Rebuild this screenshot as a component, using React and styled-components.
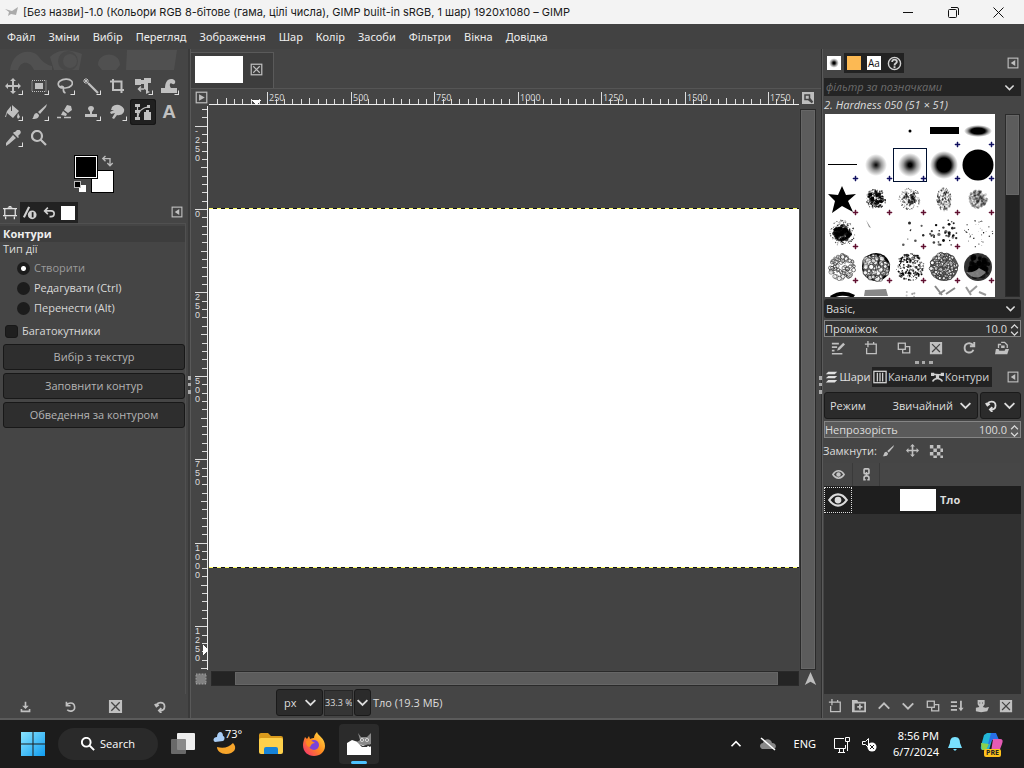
import React, { useLayoutEffect, useRef, useState } from "react";
import styled, { createGlobalStyle, css } from "styled-components";

const Global = createGlobalStyle`
  * { box-sizing: border-box; }
  body { margin: 0; background: #454545; color: #dcdcdc; font: 11px/16px "Open Sans", "Noto Sans", sans-serif; }
  button, input, select { font: inherit; color: inherit; margin: 0; padding: 0; border: 0; background: none; }
  button { cursor: pointer; }
  svg { display: block; flex: none; }
  p, h1, h2 { margin: 0; font: inherit; }
`;

/* ---------- icons ---------- */

const line = { fill: "none", stroke: "currentColor", strokeWidth: 1.5 };
const glyphs = {
  move: <path d="M8 0l3 3H9v4h4V5l3 3-3 3V9H9v4h2l-3 3-3-3h2V9H3v2L0 8l3-3v2h4V3H5z" />,
  rect: <><rect x="1" y="2.500" width="14" height="11" {...line} strokeWidth="1" strokeDasharray="1 1" /><rect x="4" y="5" width="8" height="6" /></>,
  lasso: <path {...line} strokeWidth="1.700" d="M6 10C1 10 0 5 3 3s9-3 11.500 0-1 7-6 7-5 0-5-1 3-1 3 1-1 4 2 5" />,
  wand: <><path {...line} strokeWidth="2.200" d="M5 5l10 10" /><path {...line} strokeWidth="1" d="M3 0v6M0 3h6M1 1l4 4M5 1L1 5" /></>,
  crop: <path {...line} strokeWidth="2" d="M1 3.500h11.500V15M4 1v11h11" />,
  transform: <><path d="M0 1h6v1h3V0h7v5h-3v8l2 1-4 2v-4l-2-1V6H6v1H0z" /><path {...line} d="M9 11H4M6 8.500L3.500 11 6 13.500" /></>,
  warp: <path d="M0 15v-5h4C4 5 6 1 10 1c3 0 5 2 4 4s-3 1-4 0c-2 1-1 4 0 5h6v5z" />,
  bucket: <path d="M2 7l4-5v5h1V1l7 6-6 7-6-5-1 4H0zM13 9l2 4-2 2-1-2z" />,
  brush: <path d="M16 0l-1 3-6 7-2-2zM6 9l2 2c0 4-4 4-7 4 2-1 1-6 5-6z" />,
  eraser: <><path d="M10 1l4 1 1 4-4 3-4-3zM6 7l4 3-1 2-5-1z" /><path {...line} d="M0 13.500h4M7 13.500h7" /></>,
  stamp: <path d="M8 2a3 3 0 013 3L9 8v2h5v3H2v-3h5V8L5 5a3 3 0 013-3z" />,
  smudge: <path d="M3 3c4-4 10-2 12 2 1 4-3 7-7 6l-3 4-2-1 3-5-4 1-1-2 4-2-3 0z" />,
  path: <><path {...line} strokeWidth="1.200" d="M2.500 1v14M3 14C3 7 8 3 14 3" /><path d="M0 0h5v3H0zM0 6h5v3H0zM0 13h5v3H0zM12 1h3v3h-3zM11 6h3v2h2v8H9V8h2z" /></>,
  picker: <path d="M12 0c3-1 5 2 3 4l-2 2 1 1-1 1-5-5 1-1 1 0zM8 5l3 3-7 6-3 2 0-3z" />,
  zoom: <path {...line} strokeWidth="2.200" d="M10 10l5 5M11 6A5 5 0 111 6a5 5 0 0110 0z" />,
  swap: <path {...line} d="M5 1L2 4l3 3M2 4h8v8M7 9l3 3 3-3" />,
  options: <><path d="M5 2l2-2h2l2 2z" /><rect x="2" y="3" width="12" height="8" {...line} /><path {...line} d="M0 3h2M0 11h2M14 3h2M14 11h2M3 12v3M13 12v3" /></>,
  device: <><path {...line} strokeWidth="2.500" d="M1 13L7 1" /><circle cx="10.500" cy="10" r="5" /><path d="M10 7h2v6h-2z" fill="#222" /></>,
  undo: <path {...line} strokeWidth="2" d="M6 2L2 6l4 4M2 6h8c5 0 5 7 0 7H8" />,
  panel: <><rect x="1.500" y="1.500" width="13" height="13" {...line} /><path d="M11 4v8L5 8z" /></>,
  panelRight: <><rect x="1.500" y="1.500" width="13" height="13" {...line} /><path d="M5 4v8l7-4z" /></>,
  close: <><rect x="1.500" y="1.500" width="13" height="13" {...line} /><path {...line} d="M4 4l8 8M12 4l-8 8" /></>,
  deleteBox: <path fillRule="evenodd" d="M1 1h14v14H1zM4 3L3 4l4 4-4 4 1 1 4-4 4 4 1-1-4-4 4-4-1-1-4 4z" />,
  save: <path d="M7 2h2v5h3L8 11 4 7h3zM2 11h2v2h8v-2h2v4H2z" />,
  restore: <path {...line} strokeWidth="2" d="M3 2v5h5M3 7c2-4 9-5 10 1s-6 7-9 4" />,
  reset: <path {...line} strokeWidth="2.200" d="M3 8c0-6 10-7 10 0 0 4-3 5-6 5M9 10l-3 3 3 3M1 5l2 3 3-2" />,
  redo: <path {...line} strokeWidth="2.200" d="M13 10c-2 5-10 4-10-2s7-7 10-3M14 1v5H9" />,
  edit: <><path {...line} strokeWidth="1.800" d="M1 3h8M1 7h6M1 11h3M1 14.500h12" /><path d="M14 2l2 2-6 6-3 1 1-3z" /></>,
  newDoc: <path {...line} d="M8 3.500h6v11H3V8M4.500 0v7M1 3.500h7M11 1v3" />,
  copy: <><rect x="1.500" y="2.500" width="8" height="7" {...line} /><path {...line} d="M6.500 10v3.500h8v-7H10" /></>,
  open: <><path {...line} d="M4 8V4h3M7 1.500h4l3 3V8" /><path d="M1 9h3l1 2h6l1-2h4l-2 6H0zM7 5h4v3H7z" /></>,
  layers: <path d="M4 1h11l-3 3H1zM4 6h11l-3 3H1zM4 11h11l-3 3H1z" />,
  channels: <><rect x="1" y="1.500" width="14" height="13" {...line} /><path {...line} d="M5 3v10M8 3v10M11 3v10" /></>,
  paths: <><path {...line} strokeWidth="2" d="M1 4l14 1M2 13C4 8 12 8 14 13" /><path d="M0 2h4v4H0zM12 2h4v4h-4zM6 5h4v4H6z" /></>,
  eye: <><path {...line} strokeWidth="1.800" d="M1 8c4-6 10-6 14 0-4 6-10 6-14 0z" /><circle cx="8" cy="8" r="2.700" /></>,
  chain: <><rect x="5" y="1" width="6" height="6" rx="1" {...line} strokeWidth="2" /><path {...line} strokeWidth="2" d="M8 5v5M4 14.500h3M9 14.500h3M5 15v-3c0-3 6-3 6 0v3" /></>,
  checker: <path d="M1 1h4v4H1zM9 1h4v4H9zM5 5h4v4H5zM13 5h3v4h-3zM1 9h4v4H1zM9 9h4v4H9zM5 13h4v3H5zM13 13h3v3h-3z" />,
  folderPlus: <path fillRule="evenodd" d="M0 1h6l1 2h9v12H0zM3 5v8h11V5zM8 6h2v2h2v2h-2v2H8v-2H6V8h2z" />,
  up: <path {...line} strokeWidth="2.200" d="M2 11l6-6 6 6" />,
  down: <path {...line} strokeWidth="2.200" d="M2 5l6 6 6-6" />,
  merge: <><path {...line} strokeWidth="2" d="M1 3.500h7M1 8h7M1 12.500h7M12.500 2v10" /><path d="M9.500 10h6L12.500 14z" /></>,
  mask: <path fillRule="evenodd" d="M3 1h8v5L9 9l3 1 4-1-2 5-7 1-6-1v-4l4-1-2-3zM5 4v1h1V4zM8 4v1h1V4z" />,
  help: <><circle cx="8" cy="8" r="6.500" {...line} /><path {...line} strokeWidth="2" d="M5.500 6.500c0-4 5-3 5-.5 0 2-2.500 1.500-2.500 4M8 11v2" /></>,
  nav: <path d="M8 0l7 16-7-4-7 4z" />,
  quick: <><rect x="2" y="2" width="12" height="12" opacity=".5" /><rect x="1.500" y="1.500" width="13" height="13" {...line} strokeDasharray="1 1" /></>,
  navZoom: <path fillRule="evenodd" d="M0 0h16v16H0zM3 3v8h5l5 4 2-2-4-5V3zM5 5h4v4H5z" />,
};

const Svg = styled.svg.attrs({ viewBox: "0 0 16 16", fill: "currentColor", "aria-hidden": true })`
  width: ${(p) => p.$size || 16}px;
  height: ${(p) => p.$size || 16}px;
`;
const Icon = ({ name, size }) => <Svg $size={size}>{glyphs[name]}</Svg>;

/* ---------- window frame ---------- */

const Screen = styled.div`
  display: flex; flex-direction: column; height: 100vh; min-height: 640px; overflow: hidden;
`;
const TitleBar = styled.header`
  display: flex; align-items: center; height: 24px; padding-left: 5px; gap: 4px;
  background: #f3f3f3; color: #1a1a1a; font: 11px/16px Inter, "Noto Sans", sans-serif;
`;
const TitleText = styled.h1`flex: 1; white-space: nowrap;`;
const WindowButtons = styled.div`display: flex; padding-right: 3px;`;
const WindowButton = styled.button`
  width: 45px; height: 24px; display: grid; place-items: center; color: #111;
`;
const MenuBar = styled.nav`
  display: flex; align-items: center; gap: 13px; height: 25px; padding: 0 7px; flex: none;
  font: 11px/16px "Noto Sans", sans-serif; color: #eee; background: #424242;
`;
const MenuItem = styled.button`white-space: nowrap;`;
const Workspace = styled.main`
  flex: 1; min-height: 0; display: grid; grid-template-columns: 190px minmax(0, 1fr) 203px;
  border-bottom: 2px solid #5b5b5b;
`;
const IconButton = styled.button`
  display: grid; place-items: center; min-width: 16px; height: 16px; color: ${(p) => p.$color || "#c0c0c0"};
`;
const Grip = styled.i`
  display: block; border: 0 dotted #aaa; flex: none;
  ${(p) => p.$vertical ? css`width: 3px; height: 18px; border-left-width: 3px;` : css`width: 18px; height: 3px; border-top-width: 3px;`}
`;

/* ---------- left dock ---------- */

const Dock = styled.aside`
  display: flex; flex-direction: column; min-height: 0; position: relative; min-width: 0;
  border-right: 2px solid #3a3a3a;
`;
const DockGrip = styled.span`
  position: absolute; top: 327px; ${(p) => p.$side}: -3px; z-index: 1;
`;
const LogoStrip = styled.svg`width: 180px; height: 24px;`;
const Tools = styled.div`
  display: grid; grid-template-columns: repeat(7, 26px); grid-auto-rows: 26px;
`;
const Tool = styled.button`
  display: grid; place-items: center; position: relative; color: #c0c0c0; border-radius: 3px;
  ${(p) => p.$active && css`background: #202020; box-shadow: inset 0 0 0 1px #161616;`}
  &::after {
    content: ""; display: ${(p) => (p.$plain ? "none" : "block")};
    position: absolute; right: 3px; bottom: 4px; border: 1px solid; border-color: transparent #ddd #ddd transparent; width: 3px; height: 3px;
  }
`;
const ToolLetter = styled.b`font: bold 19px/20px "Liberation Sans", sans-serif;`;
const ColorArea = styled.div`height: 51px; padding: 4px 0 0 73px;`;
const Tabs = styled.div`
  display: flex; align-items: stretch; height: ${(p) => p.$height || 20}px; flex: none;
`;
const Tab = styled.button`
  display: flex; align-items: center; justify-content: center; gap: 1px;
  min-width: ${(p) => p.$min || 20}px; white-space: nowrap; color: ${(p) => (p.$active ? "#e0e0e0" : "#d0d0d0")};
  background: ${(p) => (p.$active ? "#454545" : "#222")};
`;
const Swatch = styled.i`
  display: grid; place-items: center; width: 14px; height: 14px; color: #111; font-style: normal; font-size: 10px; line-height: 14px;
  background: ${(p) => p.$fill || "#fff"};
`;
const Push = styled.span`flex: 1;`;
const PanelBody = styled.section`
  flex: 1; min-height: 0; display: flex; flex-direction: column;
  border: 1px solid #505050; border-width: 1px 1px 0 0; margin-right: 2px;
`;
const PanelTitle = styled.h2`
  font-weight: bold; line-height: 16px; padding-left: 3px; color: #eee; background: #3d3d3d; margin-top: 2px;
`;
const Group = styled.fieldset`border: 0; margin: 0; padding: 0; min-width: 0;`;
const Legend = styled.legend`padding: 0 0 0 3px; line-height: 14px; height: 16px;`;
const Choice = styled.label`
  display: flex; align-items: center; height: 20px; padding-left: ${(p) => p.$indent}px; gap: 4px;
  color: ${(p) => (p.$dim ? "#9a9a9a" : "#d8d8d8")};
`;
const PolygonRow = styled(Choice).attrs({ $indent: 5 })`margin-top: 3px;`;
const Radio = styled.input.attrs({ type: "radio" })`
  appearance: none; width: 13px; height: 13px; border-radius: 50%; background: #1c1c1c;
  &:checked { background: radial-gradient(circle, #fff 2px, #1c1c1c 3px); }
`;
const Check = styled.input.attrs({ type: "checkbox" })`
  appearance: none; width: 13px; height: 13px; border-radius: 3px; background: #1f1f1f; border: 1px solid #181818;
`;
const Actions = styled.div`
  display: flex; flex-direction: column; gap: 3px; padding: 0 0 0 3px; margin-top: 3px;
`;
const Action = styled.button`
  height: 26px; border: 1px solid #181818; border-radius: 3px; background: #2e2e2e; color: #b4b4b4;
`;
const ToolRow = styled.div`
  display: flex; align-items: center; justify-content: space-between;
  height: ${(p) => p.$height || 24}px; flex: none; padding: 0 ${(p) => p.$pad || 0}px; margin-right: ${(p) => p.$inset || 0}px;
`;

/* ---------- image window ---------- */

const Center = styled.section`
  display: flex; flex-direction: column; min-width: 0; min-height: 0; border-left: 1px solid #595959;
`;
const ImageTabs = styled.div`
  display: flex; height: 40px; padding-top: 3px; flex: none; border-bottom: 1px solid #555;
`;
const ImageTab = styled.div`
  display: flex; align-items: center; gap: 5px; width: 83px; padding: 0 0 2px 4px; background: #3d3d3d; border: 1px solid #5a5a5a; border-width: 1px 1px 0 0;
`;
const Thumb = styled.i`width: ${(p) => p.$w}px; height: ${(p) => p.$h}px; background: #fff; flex: none;`;
const CanvasGrid = styled.div`
  flex: 1; min-height: 0; display: grid; padding-left: 2px;
  grid-template: 17px minmax(0, 1fr) 17px / 16px minmax(0, 1fr) 22px;
`;
const Corner = styled.div`display: grid; place-items: center; color: #bdbdbd; min-width: 0;`;
const ViewCorner = styled(Corner)`justify-items: start; padding-left: 3px;`;
const Ruler = styled.svg`
  width: 100%; height: 100%; overflow: hidden; shape-rendering: crispEdges;
  text { font: 9px ${(p) => (p.$digits ? '"Liberation Sans"' : '"Open Sans"')}, "Noto Sans", sans-serif; fill: #ddd; }
`;
const Canvas = styled.div`
  display: flex; flex-direction: column; justify-content: center; background: #434343; min-height: 0;
`;
const Picture = styled.div`
  display: flex; flex-direction: column; justify-content: space-between; height: 360px; background: #fff;
  &::before, &::after {
    content: ""; display: block; height: 1px;
    background: repeating-linear-gradient(90deg, #ff6 0 4px, #111 4px 8px);
  }
`;
const ScrollTrack = styled.div`
  background: #242424; border: 1px solid #2a2a2a; display: flex;
  ${(p) => p.$vertical ? css`flex-direction: column; margin: 3px 5px 0 1px; min-height: 0;` : css`margin: 1px 0 1px 2px; padding: 0 20px 0 23px;`}
`;
const ScrollThumb = styled.div`flex: 1; background: #5c5c5c; border: 1px solid #666;`;
const Status = styled.footer`
  display: flex; align-items: center; height: 31px; flex: none; padding-left: 85px; gap: 1px; font-size: 11px;
`;
const SelectBox = styled.label`
  display: flex; align-items: center; position: relative; height: 27px; flex: ${(p) => p.$flex || "none"};
  width: ${(p) => (p.$w ? p.$w + "px" : "auto")}; min-width: 0;
  background: #2b2b2b; border: 1px solid #1a1a1a; border-radius: 3px; color: #ddd;
  > svg { position: absolute; right: 5px; pointer-events: none; }
`;
const Select = styled.select`
  appearance: none; flex: 1; min-width: 0; width: 100%; height: 100%; padding: 0 24px 0 7px; outline: none;
  text-align-last: ${(p) => (p.$right ? "right" : "left")}; font-size: 11px;
`;
const ZoomInput = styled.input`width: 29px; height: 26px; font-size: 9px; background: #353535; border: 1px solid #262626;`;
const ZoomButton = styled.button`
  width: 17px; height: 27px; display: grid; place-items: center; background: #2b2b2b; border: 1px solid #1a1a1a; border-radius: 3px;
`;
const StatusText = styled.p`padding-left: 1px; font-size: 11px;`;

/* ---------- right dock ---------- */

const RightAside = styled(Dock)`border-right: 0; border-left: 1px solid #303030; box-shadow: inset 1px 0 #5a5a5a; padding-left: 1px;`;
const GripRow = styled.div`display: flex; justify-content: center; align-items: center; height: 7px; flex: none;`;
const RightTabs = styled(Tabs)`padding-right: 3px; margin: ${(p) => p.$top}px 0 0 1px; ${IconButton} { align-self: center; }`;
const FilterBox = styled.label`
  display: flex; align-items: center; height: 18px; margin: 5px 3px 0 1px; background: #242424; padding-right: 6px;
`;
const FilterInput = styled.input`
  flex: 1; min-width: 0; outline: none; padding-left: 2px; font-style: italic;
  &::placeholder { color: #6c6c6c; opacity: 1; }
`;
const BrushName = styled.p`font-style: italic; height: 18px; line-height: 18px; padding-left: 1px; white-space: nowrap;`;
const BrushArea = styled.div`display: flex; height: 183px; padding: 0 4px 0 2px; justify-content: space-between; flex: none;`;
const BrushGrid = styled.div`
  display: grid; grid-template-columns: repeat(5, 34px); grid-auto-rows: 34px; width: 170px; overflow: hidden; background: #fff;
`;
const Brush = styled.button`
  position: relative; display: grid; place-items: center; box-shadow: ${(p) => (p.$selected ? "inset 0 0 0 1px #001030" : "none")};
`;
const BrushScroll = styled.div`width: 15px; background: #222; border: 1px solid #2b2b2b;`;
const BrushThumb = styled.div`height: 80px; background: #5c5c5c; border: 1px solid #666;`;
const TagBox = styled(SelectBox)`height: 19px; margin: 2px 3px 0 1px; background: #242424; border: 0; ${Select} { padding-left: 2px; }`;
const Spin = styled.label`
  display: flex; align-items: center; height: 17px; margin: ${(p) => p.$top}px 3px 0 1px;
  border: 1px solid #858585; background: ${(p) => p.$bg}; flex: none;
`;
const SpinInput = styled.input`flex: 1; min-width: 0; width: 40px; text-align: right; outline: none; padding-right: 3px;`;
const SpinArrows = styled.span`display: flex; flex-direction: column; padding-right: 1px; button { height: 7px; display: grid; place-items: center; }`;
const ModeRow = styled.div`display: flex; gap: 2px; margin: 5px 3px 0 1px;`;
const ModeLabel = styled.span`padding-left: 5px;`;
const ModeSwitch = styled.button`display: flex; align-items: center; gap: 5px; padding: 0 4px; width: 41px; background: #2b2b2b; border: 1px solid #1a1a1a; border-radius: 3px;`;
const LockRow = styled.div`display: flex; align-items: center; gap: 8px; height: 25px; flex: none; > span { width: 49px; white-space: nowrap; }`;
const LayerList = styled.div`flex: 1; min-height: 0; margin: 0 3px 0 1px; background: #303030;`;
const LayerHead = styled.div`
  display: grid; grid-template-columns: 29px 27px 1fr; height: 23px; background: #464646; align-items: stretch;
  > span { display: grid; place-items: center; border-right: 1px solid #3a3a3a; color: #c4c4c4; }
`;
const LayerRow = styled.div`display: flex; align-items: center; height: 28px; background: #1e1e1e; gap: 4px;`;
const EyeButton = styled.button`width: 28px; height: 26px; display: grid; place-items: center; border: 1px dotted #ddd; margin-right: 44px;`;

/* ---------- taskbar ---------- */

const TaskBar = styled.footer`
  display: flex; align-items: center; height: 48px; flex: none; padding: 0 19px 0 20px; background: #1c1c1c; color: #fff; font-size: 12px;
`;
const TaskApps = styled.div`display: flex; align-items: center; flex: 1; gap: 17px;`;
const TaskButton = styled.button`
  display: grid; place-items: center; position: relative; width: ${(p) => p.$w || 26}px; height: 40px; border-radius: 4px;
  ${(p) => p.$active && css`margin-left: -5px; background: #2b2b2b; &::after { content: ""; position: absolute; bottom: 0; width: 16px; height: 3px; border-radius: 2px; background: #4cc2ff; }`}
`;
const SearchButton = styled.button`
  display: flex; align-items: center; justify-content: center; gap: 5px; width: 100px; height: 32px; border-radius: 16px; background: #2a2a2a; margin: 0 -5px; font-size: 11px;
`;
const Tray = styled.div`display: flex; align-items: center; gap: 10px;`;
const Clock = styled.time`text-align: right; font: 11px/16px "Noto Sans", sans-serif; width: 52px; margin-right: -2px; white-space: nowrap;`;
const Art = styled.svg.attrs({ "aria-hidden": true })`width: ${(p) => p.$w}px; height: ${(p) => p.$h}px;`;
const Temp = styled.span`position: absolute; left: 12px; top: 3px; font-size: 11px; line-height: 14px;`;
const CloudButton = styled(IconButton)`margin: 0 7px 0 5px;`;
const LanguageButton = styled.button`font: 11px/16px "Noto Sans", sans-serif; margin-right: 7px;`;
const CopilotButton = styled.button`position: relative; margin-left: 6px;`;
const Badge = styled.b`position: absolute; left: 5px; bottom: -1px; padding: 0 2px; border-radius: 2px; background: #ffc21c; color: #222; font-size: 7px; line-height: 8px;`;

/* ---------- drawings from data ---------- */

const STEP = 8.345;
const ticks = (origin, from, to) => {
  const out = [];
  for (let i = -12; i < 500; i++) {
    const at = Math.round(origin + i * STEP);
    if (at >= from && at < to) out.push({ at, value: i * 25, major: i % 10 === 0, mid: i % 5 === 0 });
  }
  return out;
};

const useBoxSize = () => {
  const ref = useRef(null);
  const [size, setSize] = useState({ width: 0, height: 0 });
  useLayoutEffect(() => {
    const read = () => {
      const box = ref.current.getBoundingClientRect();
      setSize({ width: box.width, height: box.height });
    };
    read();
    window.addEventListener("resize", read);
    return () => window.removeEventListener("resize", read);
  }, []);
  return [ref, size];
};

const TopRuler = () => {
  const [ref, { width }] = useBoxSize();
  return (
    <Ruler ref={ref}>
      <rect x="0" y="15" width="100%" height="1" fill="#eee" />
      {ticks(-25, 2, width).map((t) => (
        <g key={t.at}>
          <rect x={t.at} y={t.major ? 3 : t.mid ? 9 : 10} width="1" height={t.major ? 12 : t.mid ? 6 : 5} fill="#ddd" />
          {t.major && t.at + 26 < width && <text x={t.at + 2} y="12">{t.value}</text>}
        </g>
      ))}
      <path d="M42 11h10l-5 5z" fill="#fff" />
    </Ruler>
  );
};

const SideRuler = () => {
  const [ref, { height }] = useBoxSize();
  return (
    <Ruler ref={ref} $digits>
      <rect x="14" y="0" width="1" height="100%" fill="#eee" />
      {ticks(103, 3, height).map((t) => (
        <g key={t.at}>
          <rect x={t.major ? 2 : t.mid ? 8 : 9} y={t.at} width={t.major ? 12 : t.mid ? 6 : 5} height="1" fill="#ddd" />
          {t.major && t.at + 38 < height && String(t.value).split("").map((c, n) => <text key={n} x="2" y={t.at + 8 + n * 9}>{c}</text>)}
        </g>
      ))}
      <path d="M10 539v10l5-5z" fill="#fff" />
    </Ruler>
  );
};

const random = (seed) => () => {
  seed = (seed * 16807) % 2147483647;
  return seed / 2147483647;
};
const Specks = ({ seed, count, spread, size, dark = 1, ring }) => {
  const next = random(seed * 7919);
  return Array.from({ length: count }, (_, i) => {
    const angle = next() * 6.283;
    const r = spread * Math.sqrt(next());
    return (
      <circle key={i} cx={(17 + Math.cos(angle) * r).toFixed(1)} cy={(17 + Math.sin(angle) * r).toFixed(1)} r={(size * (0.5 + next())).toFixed(1)}
        fill={ring ? "#fff" : "#000"} stroke={ring ? "#222" : "none"} strokeWidth=".8" opacity={dark * (0.5 + next() / 2)} />
    );
  });
};
const Soft = ({ id, rx, ry, hard = 0 }) => (
  <>
    <radialGradient id={id}><stop offset={hard} stopColor="#000" /><stop offset={(1 + hard) / 2} stopColor="#000" stopOpacity=".4" /><stop offset="1" stopColor="#000" stopOpacity="0" /></radialGradient>
    <ellipse cx="17" cy="17" rx={rx} ry={ry} fill={`url(#${id})`} />
  </>
);
const NAVY = "#101060";
const WINE = "#601030";
const brushes = [
  [null], [null],
  [<circle cx="17" cy="17" r="1.500" />],
  [<rect x="3" y="13" width="29" height="7" />, NAVY],
  [<Soft id="flat" rx="14" ry="6" hard={0.5} />, NAVY],
  [<rect x="3" y="16" width="29" height="1" />, NAVY],
  [<Soft id="soft25" rx="11" ry="11" />, NAVY],
  [<Soft id="soft50" rx="12" ry="12" hard={0.15} />, NAVY],
  [<Soft id="soft75" rx="14" ry="14" hard={0.5} />, NAVY],
  [<circle cx="17" cy="17" r="15.500" />, NAVY],
  [<path d="M17 4l4 9 10-1-8 7 5 11-11-6-10 7 3-12-7-7 10 1z" />, WINE],
  [<><Specks seed={11} count={160} spread={10} size={0.6} /><Specks seed={12} count={60} spread={8} size={1.2} /></>, WINE],
  [<><Specks seed={22} count={150} spread={11} size={0.5} dark={0.7} /><Specks seed={23} count={40} spread={7} size={1} dark={0.8} /></>, WINE],
  [<g transform="translate(7 0) scale(.6 1)"><Specks seed={33} count={190} spread={12} size={0.8} dark={0.6} /></g>, WINE],
  [<Specks seed={44} count={210} spread={9} size={1} dark={0.3} />, WINE],
  [<><Specks seed={55} count={200} spread={13} size={0.5} dark={0.8} /><Specks seed={56} count={110} spread={8} size={1.4} /></>, WINE],
  [<path d="M7 4l5 8-2-1z" fill="#888" />],
  [<Specks seed={67} count={8} spread={15} size={1} />, WINE],
  [<Specks seed={78} count={36} spread={14} size={1.1} />, WINE],
  [<Specks seed={89} count={36} spread={15} size={0.5} />],
  [<Specks seed={91} count={80} spread={12} size={1.5} ring dark={0.9} />, WINE],
  [<><circle cx="17" cy="17" r="14" /><Specks seed={92} count={130} spread={13} size={2} ring /></>, WINE],
  [<Specks seed={93} count={260} spread={14} size={0.7} />, WINE],
  [<><circle cx="17" cy="17" r="14" fill="#555" /><Specks seed={94} count={190} spread={13} size={1.4} ring /></>, WINE],
  [<><circle cx="17" cy="17" r="14" fill="#333" /><Specks seed={95} count={60} spread={11} size={2} /><path d="M5 22q9 1 13-4l7 4q-9 11-20 0z" fill="#aaa" opacity=".7" /></>, WINE],
  [<path d="M5 12q12-8 25-1l-2 3q-12-5-21 1z" />],
  [<path d="M6 6l21-1 2 7H5z" fill="#888" />],
  [<Specks seed={96} count={16} spread={10} size={0.8} dark={0.4} />],
  [<path d="M8 2l7 9M19 10l9-6M12 10l6-4" stroke="#888" strokeWidth="2" />],
  [<path d="M5 3l5 8M8 9l8-7M18 8l7 3" stroke="#999" strokeWidth="2" />],
];

const toolList = [
  ["move", "Переміщення"], ["rect", "Прямокутник"], ["lasso", "Ласо"], ["wand", "Чарівна паличка"], ["crop", "Кадрування", 1], ["transform", "Перетворення"], ["warp", "Викривлення"],
  ["bucket", "Заливання"], ["brush", "Пензель"], ["eraser", "Гумка", 1], ["stamp", "Штамп"], ["smudge", "Розмазування"], ["path", "Контури", 1], ["text", "Текст", 1],
  ["picker", "Піпетка"], ["zoom", "Масштаб", 1],
];
const menus = ["Файл", "Зміни", "Вибір", "Перегляд", "Зображення", "Шар", "Колір", "Засоби", "Фільтри", "Вікна", "Довідка"];

const Arrows = () => (
  <SpinArrows>
    <button aria-label="Більше"><Icon name="up" size={9} /></button>
    <button aria-label="Менше"><Icon name="down" size={9} /></button>
  </SpinArrows>
);

function LeftDock() {
  return (
    <Dock>
      <LogoStrip viewBox="0 0 180 24" fill="#505050">
        <path d="M10 21C12 5 25 0 34 4c6 2 6 10 18 13v4H34c-4-9-13-10-16 0zM50 8c8-8 20-8 32-3l-3 16H54z" />
        <circle cx="68" cy="12" r="10" fill="#484848" /><circle cx="70" cy="12" r="7" /><path d="M98 16c0-14 22-14 22 0l-4 5h-14zM127 1h50l-3 20h-48z" />
      </LogoStrip>
      <Tools>
        {toolList.map(([name, label, plain]) => (
          <Tool key={name} aria-label={label} $plain={plain} $active={name === "path"}>
            {name === "text" ? <ToolLetter>A</ToolLetter> : <Icon name={name} size={16} />}
          </Tool>
        ))}
      </Tools>
      <ColorArea>
        <Art $w={44} $h={42}>
          <rect x="18.500" y="15.500" width="22" height="22" fill="#fff" stroke="#000" />
          <rect x="1.500" y=".5" width="23" height="23" fill="#fff" stroke="#000" /><rect x="3" y="2" width="20" height="20" />
          <rect x="6" y="30" width="7" height="7" fill="#fff" /><rect x="1.500" y="26.500" width="6" height="6" stroke="#bbb" />
          <g transform="translate(28 0) scale(.9)" color="#bbb">{glyphs.swap}</g>
        </Art>
      </ColorArea>
      <Tabs $height={21}>
        <Tab $active aria-label="Параметри"><Icon name="options" size={14} /></Tab>
        <Tab aria-label="Пристрій"><Icon name="device" size={14} /></Tab>
        <Tab $min={18} aria-label="Історія"><Icon name="undo" size={13} /></Tab>
        <Tab aria-label="Зображення"><Swatch /></Tab>
        <Push />
        <ToolRow $pad={3} $height={19}><IconButton aria-label="Меню вкладки"><Icon name="panel" size={12} /></IconButton></ToolRow>
      </Tabs>
      <PanelBody>
        <PanelTitle>Контури</PanelTitle>
        <Group>
          <Legend>Тип дії</Legend>
          <Choice $indent={17} $dim><Radio name="mode" defaultChecked />Створити</Choice>
          <Choice $indent={17}><Radio name="mode" />Редагувати (Ctrl)</Choice>
          <Choice $indent={17}><Radio name="mode" />Перенести (Alt)</Choice>
        </Group>
        <PolygonRow><Check />Багатокутники</PolygonRow>
        <Actions>
          <Action>Вибір з текстур</Action>
          <Action>Заповнити контур</Action>
          <Action>Обведення за контуром</Action>
        </Actions>
      </PanelBody>
      <ToolRow $pad={17} $inset={2}>
        <IconButton aria-label="Зберегти"><Icon name="save" size={13} /></IconButton>
        <IconButton aria-label="Відновити"><Icon name="restore" size={13} /></IconButton>
        <IconButton aria-label="Вилучити"><Icon name="deleteBox" size={15} /></IconButton>
        <IconButton aria-label="Скинути"><Icon name="reset" size={13} /></IconButton>
      </ToolRow>
      <DockGrip $side="right"><Grip $vertical /></DockGrip>
    </Dock>
  );
}

function ImageWindow() {
  return (
    <Center>
      <ImageTabs>
        <ImageTab><Thumb $w={48} $h={27} /><IconButton aria-label="Закрити"><Icon name="close" size={13} /></IconButton></ImageTab>
      </ImageTabs>
      <CanvasGrid>
        <Corner><Icon name="panelRight" size={13} /></Corner>
        <TopRuler />
        <ViewCorner><Icon name="navZoom" size={12} /></ViewCorner>
        <SideRuler />
        <Canvas><Picture /></Canvas>
        <ScrollTrack $vertical><ScrollThumb /></ScrollTrack>
        <Corner><Icon name="quick" size={12} /></Corner>
        <ScrollTrack><ScrollThumb /></ScrollTrack>
        <Corner><Icon name="nav" size={13} /></Corner>
      </CanvasGrid>
      <Status>
        <SelectBox $w={47}><Select aria-label="Одиниця" defaultValue="px"><option>px</option></Select><Icon name="down" size={13} /></SelectBox>
        <ZoomInput aria-label="Масштаб" defaultValue="33.3 %" />
        <ZoomButton aria-label="Вибір масштабу"><Icon name="down" size={13} /></ZoomButton>
        <StatusText>Тло (19.3 МБ)</StatusText>
      </Status>
    </Center>
  );
}

const PLUS = "M30 26h1v2h2v1h-2v2h-1v-2h-2v-1h2z";

function RightDock() {
  return (
    <RightAside>
      <RightTabs $top={4} $height={20}>
        <Tab $active aria-label="Пензлі"><Swatch><Art $w={14} $h={14} viewBox="4 4 26 26"><Soft id="tabBrush" rx="9" ry="9" hard={0.2} /></Art></Swatch></Tab>
        <Tab aria-label="Текстури"><Swatch $fill="#fcb953" /></Tab>
        <Tab aria-label="Шрифти"><Swatch>Aa</Swatch></Tab>
        <Tab aria-label="Довідка"><Icon name="help" size={15} /></Tab>
        <Push /><IconButton aria-label="Меню вкладки"><Icon name="panel" size={12} /></IconButton>
      </RightTabs>
      <FilterBox><FilterInput aria-label="Фільтр" placeholder="фільтр за позначками" /><Icon name="down" size={11} /></FilterBox>
      <BrushName>2. Hardness 050 (51 × 51)</BrushName>
      <BrushArea>
        <BrushGrid>
          {brushes.map(([art, mark], i) => (
            <Brush key={i} aria-label={`Пензель ${i + 1}`} $selected={i === 7}>
              <Art $w={34} $h={34} viewBox="0 0 34 34">
                {art}
                {mark && <path d={PLUS} transform="translate(0 2)" fill={mark} stroke={mark} strokeWidth=".5" />}
              </Art>
            </Brush>
          ))}
        </BrushGrid>
        <BrushScroll><BrushThumb /></BrushScroll>
      </BrushArea>
      <TagBox><Select aria-label="Мітка" defaultValue="Basic,"><option>Basic,</option></Select><Icon name="down" size={11} /></TagBox>
      <Spin $top={2} $bg="#343434">Проміжок<SpinInput aria-label="Проміжок" defaultValue="10.0" /><Arrows /></Spin>
      <ToolRow $pad={7} $inset={7} $height={22}>
        {[["edit", "Редагувати"], ["newDoc", "Створити"], ["copy", "Дублювати"], ["deleteBox", "Вилучити"], ["redo", "Оновити"], ["open", "Відкрити"]].map(([n, l]) => (
          <IconButton key={n} aria-label={l}><Icon name={n} size={14} /></IconButton>
        ))}
      </ToolRow>
      <GripRow><Grip /></GripRow>
      <RightTabs $top={1} $height={20}>
        <Tab $active $min={48}><Icon name="layers" size={13} />Шари</Tab>
        <Tab $min={56}><Icon name="channels" size={14} />Канали</Tab>
        <Tab $min={64}><Icon name="paths" size={13} />Контури</Tab>
        <Push /><IconButton aria-label="Меню вкладки"><Icon name="panel" size={12} /></IconButton>
      </RightTabs>
      <ModeRow>
        <SelectBox $flex="1"><ModeLabel>Режим</ModeLabel><Select $right aria-label="Режим" defaultValue="Звичайний"><option>Звичайний</option></Select><Icon name="down" size={13} /></SelectBox>
        <ModeSwitch aria-label="Група режимів"><Icon name="reset" size={13} /><Icon name="down" size={13} /></ModeSwitch>
      </ModeRow>
      <Spin $top={2} $bg="#5a5a5a">Непрозорість<SpinInput aria-label="Непрозорість" defaultValue="100.0" /><Arrows /></Spin>
      <LockRow>
        <span>Замкнути:</span>
        <IconButton aria-label="Пікселі"><Icon name="brush" size={12} /></IconButton>
        <IconButton aria-label="Розташування"><Icon name="move" size={13} /></IconButton>
        <IconButton aria-label="Прозорість"><Icon name="checker" size={14} /></IconButton>
      </LockRow>
      <LayerList>
        <LayerHead><span><Icon name="eye" size={13} /></span><span><Icon name="chain" size={13} /></span><i /></LayerHead>
        <LayerRow>
          <EyeButton aria-label="Видимість"><Icon name="eye" size={20} /></EyeButton>
          <Thumb $w={36} $h={22} /><b>Тло</b>
        </LayerRow>
      </LayerList>
      <ToolRow $pad={4} $inset={6}>
        {[["newDoc", "Створити шар"], ["folderPlus", "Створити групу"], ["up", "Вище"], ["down", "Нижче"], ["copy", "Дублювати шар"], ["merge", "Об’єднати"], ["mask", "Маска"], ["deleteBox", "Вилучити шар"]].map(([n, l]) => (
          <IconButton key={n} aria-label={l}><Icon name={n} size={14} /></IconButton>
        ))}
      </ToolRow>
      <DockGrip $side="left"><Grip $vertical /></DockGrip>
    </RightAside>
  );
}

function Taskbar() {
  return (
    <TaskBar>
      <TaskApps>
        <TaskButton aria-label="Start">
          <Art $w={24} $h={24} viewBox="0 0 24 24"><defs><linearGradient id="win" x2="1" y2="1"><stop stopColor="#8ae4ff" /><stop offset="1" stopColor="#0f9cf0" /></linearGradient></defs>
            <path fill="url(#win)" d="M0 0h11.500v11.500H0zM12.500 0H24v11.500H12.500zM0 12.500h11.500V24H0zM12.500 12.500H24V24H12.500z" /></Art>
        </TaskButton>
        <SearchButton><Icon name="zoom" size={14} />Search</SearchButton>
        <TaskButton aria-label="Task view"><Art $w={26} $h={24}><rect x="7" y="1" width="18" height="17" rx="1" fill="#eee" /><rect x="1" y="7" width="15" height="15" rx="1" fill="#777" opacity=".85" /></Art></TaskButton>
        <TaskButton $w={28} aria-label="Weather">
          <Art $w={30} $h={28}><path d="M2 12c-3-2-1-5 2-5 0-6 6-7 6-1 2 0 2 4 0 5z" fill="#a9cdf5" /><path d="M4 17c7 2 12 0 16-4 5 5 1 11-7 11-5 0-9-3-9-7z" fill="#f7a52b" /></Art>
          <Temp>73°</Temp>
        </TaskButton>
        <TaskButton aria-label="Explorer"><Art $w={26} $h={24}><path d="M1 3q0-2 2-2h7l3 3h10q2 0 2 2v4H1z" fill="#d99a1c" /><path d="M1 8q0-2 2-2h20q2 0 2 2v12q0 2-2 2H3q-2 0-2-2z" fill="#fdd04b" /><path d="M6 22v-5q0-2 2-2h10q2 0 2 2v5z" fill="#1683d8" /></Art></TaskButton>
        <TaskButton aria-label="Firefox"><Art $w={24} $h={24}>
          <defs><linearGradient id="fox" x1="1" x2="0" y2="1"><stop stopColor="#ffe94a" /><stop offset=".5" stopColor="#ff8a1f" /><stop offset="1" stopColor="#f5257b" /></linearGradient></defs>
          <path fill="url(#fox)" d="M3 5l2 2 2-3 1 3c2-1 3-1 4-1 0-2 1-4 3-6 1 4 8 6 8 14 0 6-5 10-11 10S1 20 1 13c0-3 1-5 2-8z" /><circle cx="12" cy="13" r="5" fill="#7a42d8" /><path d="M4 9c4-2 6 0 9 2-4 0-4 3-5 4-3 0-4-3-4-6z" fill="#ff8b20" /></Art></TaskButton>
        <TaskButton $w={40} $active aria-label="GIMP"><Art $w={26} $h={24}><path d="M1 11l5-3 6 2 2-1 10 6 1-1v9H1z" fill="#fff" /><path d="M12 1l3 4h6l4-4v11l-5 2-7-2-2-2 3-2z" fill="#8a8a8a" /><circle cx="16" cy="8" r="1.800" fill="#fff" /><circle cx="21" cy="8" r="1.800" fill="#fff" /><circle cx="16" cy="8" r=".8" /><circle cx="21" cy="8" r=".8" /><path d="M13 12l4 2 6-2-2 3h-5z" fill="#333" /></Art></TaskButton>
      </TaskApps>
      <Tray>
        <IconButton $color="#fff" aria-label="Hidden icons"><Icon name="up" size={12} /></IconButton>
        <CloudButton aria-label="Cloud"><Art $w={18} $h={16}><path d="M3 13c-4-3-1-6 1-6 1-5 8-5 9 0 5 0 5 6 1 6z" fill="#888" /><path d="M2 2l14 12" stroke="#fff" strokeWidth="1.500" /></Art></CloudButton>
        <LanguageButton>ENG</LanguageButton>
        <IconButton $color="#fff" aria-label="Network"><Art $w={18} $h={18} fill="none" stroke="#fff"><path d="M11 2.500H1.500v10h11V9M5 16.500h7M6.500 13v3M10.500 13v3M12.500 1.500h4v4h-4zM14.500 6v9" /></Art></IconButton>
        <IconButton $color="#fff" aria-label="Sound"><Art $w={16} $h={16}><path d="M1.500 5.500h3l3-3v9l-3-3h-3z" fill="none" stroke="#fff" /><circle cx="11" cy="11" r="4.500" fill="#fff" /><path d="M9 9l4 4M13 9l-4 4" stroke="#222" /></Art></IconButton>
        <Clock>8:56 PM<br />6/7/2024</Clock>
        <IconButton aria-label="Notifications"><Art $w={14} $h={16}><path d="M7 1c4 0 5 3 5 6l2 5H0l2-5c0-3 1-6 5-6zM5 13h4l-2 2z" fill="#79e2ff" /></Art></IconButton>
        <CopilotButton aria-label="Copilot">
          <Art $w={26} $h={24}><path d="M8 1h7l-5 17H4q-3 0-2-4L5 3z" fill="#22b6d8" /><path d="M12 1h5l3 7h-7l-5 8z" fill="#2870e8" /><path d="M14 7h7q4 0 2 5l-3 8h-8z" fill="#e45bb5" /><path d="M2 11l8 1-3 6H3z" fill="#8bd04a" /></Art>
          <Badge>PRE</Badge>
        </CopilotButton>
      </Tray>
    </TaskBar>
  );
}

export default function App() {
  return (
    <>
      <Global />
      <Screen>
        <TitleBar>
          <Art $w={14} $h={14}><path d="M0 4l7 2 6-4-2 8-5-1-3 2 1-4z" fill="#aaa" /></Art>
          <TitleText>[Без назви]-1.0 (Кольори RGB 8-бітове (гама, цілі числа), GIMP built-in sRGB, 1 шар) 1920x1080 – GIMP</TitleText>
          <WindowButtons>
            <WindowButton aria-label="Minimize"><Art $w={11} $h={11} stroke="#111"><path d="M0 5.500h10" /></Art></WindowButton>
            <WindowButton aria-label="Restore"><Art $w={11} $h={11} stroke="#111" fill="none"><rect x=".5" y="2.500" width="8" height="8" rx="1" /><path d="M3 .5h6q1.500 0 1.500 1.500v6" /></Art></WindowButton>
            <WindowButton aria-label="Close"><Art $w={11} $h={11} stroke="#111"><path d="M.5.5l10 10M10.500.5l-10 10" /></Art></WindowButton>
          </WindowButtons>
        </TitleBar>
        <MenuBar>{menus.map((m) => <MenuItem key={m}>{m}</MenuItem>)}</MenuBar>
        <Workspace><LeftDock /><ImageWindow /><RightDock /></Workspace>
        <Taskbar />
      </Screen>
    </>
  );
}
